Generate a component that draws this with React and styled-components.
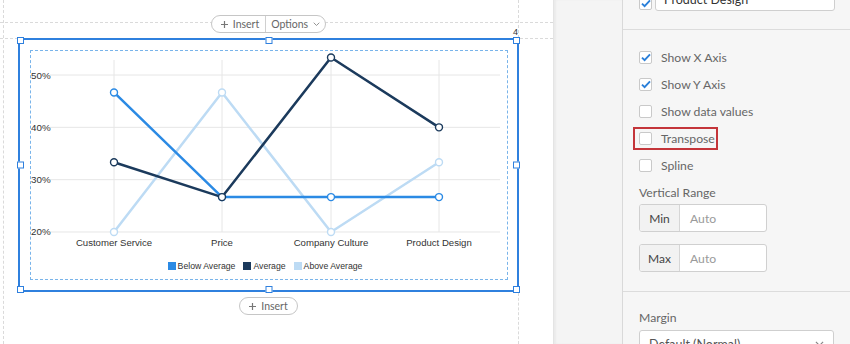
import React from "react";
import styled, { createGlobalStyle } from "styled-components";

const GlobalStyle = createGlobalStyle`
  html, body {
    margin: 0;
    padding: 0;
  }
  body {
    width: 850px;
    height: 344px;
    overflow: hidden;
    background: #fff;
    font-family: "Liberation Sans", Arial, sans-serif;
  }
`;

const Page = styled.div`
  display: flex;
  width: 850px;
  height: 344px;
  overflow: hidden;
`;

const Canvas = styled.div`
  position: relative;
  flex-shrink: 0;
  width: 553px;
  box-sizing: border-box;
  padding: 15px 0 0 18px;
  background: #fff;
`;

const Guide = styled.div`
  position: absolute;
  border: 0 dashed #dadada;
  border-width: ${(p) => (p.$v ? "0 0 0 1px" : "1px 0 0 0")};
`;

const Stage = styled.div`
  position: relative;
  z-index: 1;
  width: 501px;
  display: flex;
  flex-direction: column;
  align-items: center;
`;

const Pill = styled.div`
  display: flex;
  align-items: center;
  height: 18px;
  box-sizing: border-box;
  border: 1px solid #c6c6c6;
  border-radius: 9px;
  background: #fff;
  font-family: Lato, "Liberation Sans", sans-serif;
  font-size: 10.5px;
  color: #666;
  margin-top: ${(p) => p.$top || 0}px;
`;

const PillPart = styled.div`
  display: flex;
  align-items: center;
  gap: 5px;
  height: 100%;
  padding: 0 ${(p) => p.$pr || 6}px 0 ${(p) => p.$pl || 6}px;
  border-left: ${(p) => (p.$divider ? "1px solid #d0d0d0" : "none")};
`;

const SelectBox = styled.div`
  position: relative;
  align-self: stretch;
  height: 254px;
  margin-top: 5px;
  box-sizing: border-box;
  border: 2px solid #2f80de;
  padding: 10px 9px 10px 10px;
  display: flex;
`;

const Handle = styled.span`
  position: absolute;
  width: 7px;
  height: 7px;
  box-sizing: border-box;
  border: 1px solid #2f80de;
  background: #fff;
  ${(p) => p.$pos}
`;

const CornerNum = styled.span`
  position: absolute;
  right: -1px;
  top: -13px;
  font-size: 9px;
  color: #333;
`;

const ChartArea = styled.div`
  flex: 1;
  border: 1px dashed #79b4ea;
  display: flex;
  flex-direction: column;
`;

const Legend = styled.div`
  display: flex;
  justify-content: center;
  gap: 8px;
  margin-top: 10px;
  margin-right: 8px;
  font-size: 8.7px;
  line-height: 10px;
  color: #333;
`;

const LegendItem = styled.div`
  display: flex;
  align-items: center;
  gap: 2px;
`;

const Swatch = styled.span`
  width: 8px;
  height: 8px;
  background: ${(p) => p.$color};
`;

const Gutter = styled.div`
  flex-shrink: 0;
  width: 70px;
  box-sizing: border-box;
  background: #f4f4f4;
  border-left: 1px solid #e4e4e4;
  border-right: 1px solid #d9d9d9;
  box-shadow: inset 2px 0 2px rgba(0, 0, 0, 0.04);
`;

const Panel = styled.div`
  flex: 1;
  display: flex;
  flex-direction: column;
  background: #f6f6f6;
  overflow: hidden;
  font-family: Lato, "Open Sans", sans-serif;
  font-size: 12px;
  color: #666;
`;

const Section = styled.div`
  flex-shrink: 0;
  box-sizing: border-box;
  padding: ${(p) => p.$pad};
  height: ${(p) => (p.$h ? p.$h + "px" : "auto")};
  border-bottom: ${(p) => (p.$last ? "none" : "1px solid #dcdcdc")};
  display: flex;
  flex-direction: column;
`;

const TopRow = styled.div`
  display: flex;
  align-items: flex-end;
  gap: 3px;
  margin-top: -16px;
`;

const Check = styled.span`
  flex-shrink: 0;
  width: 13px;
  height: 13px;
  box-sizing: border-box;
  border: 1px solid #c9c9c9;
  border-radius: 2px;
  background: #fff;
  display: flex;
  align-items: center;
  justify-content: center;
  margin-bottom: ${(p) => p.$mb || 0}px;
`;

const TextBox = styled.div`
  flex: 1;
  height: 27px;
  box-sizing: border-box;
  border: 1px solid #cfcfcf;
  border-radius: 3px;
  background: #fff;
  padding: 0 8px 3px;
  display: flex;
  align-items: flex-end;
  font-size: 12.5px;
  color: #333;
`;

const OptionRow = styled.div`
  position: relative;
  display: flex;
  align-items: center;
  height: 27px;
  gap: 9px;
  font-size: 12.2px;
  ${(p) =>
    p.$highlight &&
    `&::after {
      content: "";
      position: absolute;
      left: -6px;
      top: 2px;
      width: 85px;
      height: 23px;
      box-sizing: border-box;
      border: 2px solid #c4353a;
    }`}
`;

const FieldLabel = styled.div`
  font-size: 12.2px;
  line-height: 18px;
  margin-top: ${(p) => p.$top || 0}px;
`;

const InputGroup = styled.div`
  display: flex;
  width: 128px;
  height: 28px;
  box-sizing: border-box;
  border: 1px solid #d0d0d0;
  border-radius: 3px;
  overflow: hidden;
  margin-top: ${(p) => p.$top}px;
  background: #fff;
`;

const Addon = styled.div`
  width: 39px;
  display: flex;
  align-items: center;
  justify-content: center;
  background: #f2f2f2;
  border-right: 1px solid #d6d6d6;
  font-size: 12px;
  color: #444;
`;

const Placeholder = styled.div`
  display: flex;
  align-items: center;
  padding-left: 10px;
  font-size: 12.2px;
  color: #9a9a9a;
`;

const Dropdown = styled.div`
  width: 195px;
  height: 28px;
  margin-top: 3px;
  box-sizing: border-box;
  border: 1px solid #cfcfcf;
  border-radius: 3px;
  background: #fff;
  display: flex;
  align-items: center;
  justify-content: space-between;
  padding: 0 9px;
  font-size: 12.5px;
  color: #555;
`;

const Plus = () => (
  <svg width="7" height="7" viewBox="0 0 7 7">
    <path d="M3.5 0v7M0 3.5h7" stroke="#777" strokeWidth="1.2" />
  </svg>
);

const Chevron = ({ size = 7, color = "#888" }) => (
  <svg width={size} height={size * 0.6} viewBox="0 0 10 6">
    <path d="M1 1l4 4 4-4" fill="none" stroke={color} strokeWidth="1.3" />
  </svg>
);

const Tick = () => (
  <svg width="10" height="9" viewBox="0 0 10 9">
    <path d="M1 4.6l2.6 2.6L9 1.4" fill="none" stroke="#2a7fd9" strokeWidth="1.9" />
  </svg>
);

const COLORS = { below: "#2b8ae4", average: "#1b3a5c", above: "#bddbf4" };
const CATS = ["Customer Service", "Price", "Company Culture", "Product Design"];
const XS = [83, 191, 300, 408];
const yOf = (v) => 24 + (50 - v) * 5.233;

const series = [
  { key: "above", values: [20, 46.67, 20, 33.33] },
  { key: "below", values: [46.67, 26.67, 26.67, 26.67] },
  { key: "average", values: [33.33, 26.67, 53.33, 40] },
];

function LineChart() {
  return (
    <svg width="475" height="200" style={{ display: "block" }}>
      {[50, 40, 30, 20].map((v) => (
        <g key={v}>
          <line x1="19" x2="469" y1={yOf(v)} y2={yOf(v)} stroke="#e6e6e6" />
          <text x="0" y={yOf(v) + 3.5} fontSize="9.8" fill="#333">
            {v}%
          </text>
        </g>
      ))}
      {XS.map((x, i) => (
        <g key={x}>
          <line x1={x} x2={x} y1="9" y2={yOf(20)} stroke="#e6e6e6" />
          <text x={x} y="195" fontSize="9.6" fill="#333" textAnchor="middle">
            {CATS[i]}
          </text>
        </g>
      ))}
      {series.map((s) => (
        <g key={s.key}>
          <polyline
            points={s.values.map((v, i) => `${XS[i]},${yOf(v)}`).join(" ")}
            fill="none"
            stroke={COLORS[s.key]}
            strokeWidth="2.5"
            strokeLinejoin="round"
          />
          {s.values.map((v, i) => (
            <circle
              key={i}
              cx={XS[i]}
              cy={yOf(v)}
              r="3.5"
              fill="#fff"
              stroke={COLORS[s.key]}
              strokeWidth="1.4"
            />
          ))}
        </g>
      ))}
    </svg>
  );
}

const handles = [
  "left:-3px;top:-3px;",
  "left:50%;top:-3px;transform:translateX(-50%);",
  "right:-3px;top:-3px;",
  "left:-3px;top:50%;transform:translateY(-50%);",
  "right:-3px;top:50%;transform:translateY(-50%);",
  "left:-3px;bottom:-3px;",
  "left:50%;bottom:-3px;transform:translateX(-50%);",
  "right:-3px;bottom:-3px;",
];

const options = [
  { label: "Show X Axis", checked: true },
  { label: "Show Y Axis", checked: true },
  { label: "Show data values" },
  { label: "Transpose", highlight: true },
  { label: "Spline" },
];

export default function App() {
  return (
    <Page>
      <GlobalStyle />
      <Canvas>
        <Guide $v style={{ left: 3, top: 0, bottom: 0 }} />
        <Guide style={{ left: 0, right: 0, top: 22 }} />
        <Guide style={{ left: 0, width: 18, top: 38 }} />
        <Guide style={{ left: 520, right: 0, top: 38 }} />
        <Guide $v style={{ left: 518, top: 0, height: 38 }} />
        <Guide $v style={{ left: 518, top: 293, bottom: 0 }} />
        <Stage>
          <Pill>
            <PillPart $pl={9} $pr={6}>
              <Plus />
              Insert
            </PillPart>
            <PillPart $divider $pl={5} $pr={5}>
              Options
              <Chevron />
            </PillPart>
          </Pill>
          <SelectBox>
            {handles.map((h) => (
              <Handle key={h} $pos={h} />
            ))}
            <CornerNum>4</CornerNum>
            <ChartArea>
              <LineChart />
              <Legend>
                <LegendItem>
                  <Swatch $color={COLORS.below} />
                  Below Average
                </LegendItem>
                <LegendItem>
                  <Swatch $color={COLORS.average} />
                  Average
                </LegendItem>
                <LegendItem>
                  <Swatch $color={COLORS.above} />
                  Above Average
                </LegendItem>
              </Legend>
            </ChartArea>
          </SelectBox>
          <Pill $top={5}>
            <PillPart $pl={9} $pr={9}>
              <Plus />
              Insert
            </PillPart>
          </Pill>
        </Stage>
      </Canvas>
      <Gutter />
      <Panel>
        <Section $pad="0 15px 0 16px" $h={30}>
          <TopRow>
            <Check $mb={1}>
              <Tick />
            </Check>
            <TextBox>Product Design</TextBox>
          </TopRow>
        </Section>
        <Section $pad="14px 15px 19px 16px">
          {options.map((o) => (
            <OptionRow key={o.label} $highlight={o.highlight}>
              <Check>{o.checked && <Tick />}</Check>
              {o.label}
            </OptionRow>
          ))}
          <FieldLabel $top={5}>Vertical Range</FieldLabel>
          <InputGroup $top={2}>
            <Addon>Min</Addon>
            <Placeholder>Auto</Placeholder>
          </InputGroup>
          <InputGroup $top={12}>
            <Addon>Max</Addon>
            <Placeholder>Auto</Placeholder>
          </InputGroup>
        </Section>
        <Section $pad="17px 15px 0 16px" $last>
          <FieldLabel>Margin</FieldLabel>
          <Dropdown>
            Default (Normal)
            <Chevron size={9} />
          </Dropdown>
        </Section>
      </Panel>
    </Page>
  );
}
